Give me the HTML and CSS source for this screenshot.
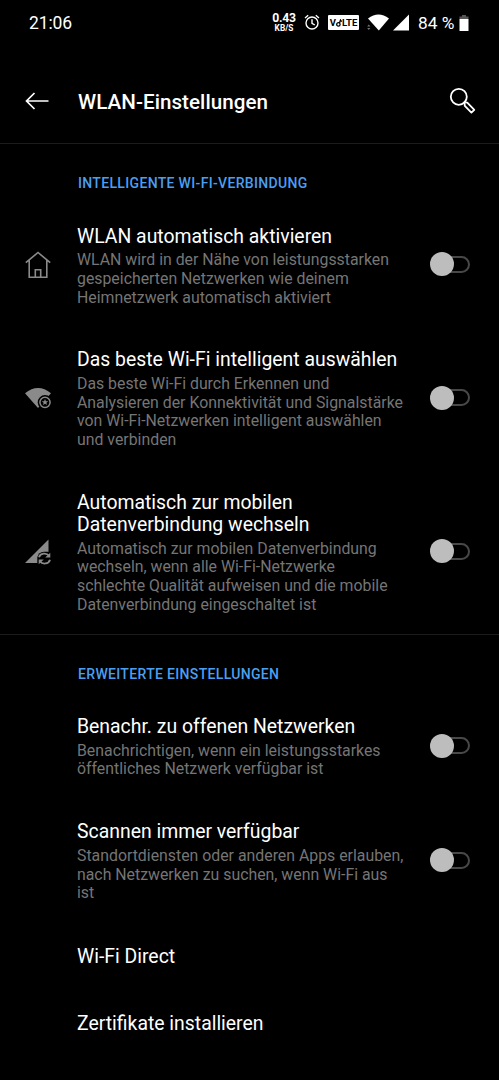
FILE: index.html
```html
<!DOCTYPE html>
<html lang="de">
<head>
<meta charset="utf-8">
<title>WLAN-Einstellungen</title>
<link rel="stylesheet" href="styles.css">
</head>
<body>
<div class="status">
  <span class="clock">21:06</span>
  <span class="speed"><b>0.43</b><small>KB/S</small></span>
  <svg class="alarm" width="16" height="17" viewBox="0 0 16 17" fill="none" stroke="#fff" stroke-width="1.4"><circle cx="8" cy="9" r="6"/><path d="M8 5.3V9.3L10.8 11M1 4 4.2 1.3M15 4 11.8 1.3"/></svg>
  <span class="volte">V<svg width="6" height="8" viewBox="0 0 6 8" fill="none" stroke="#000" stroke-width="1.3"><circle cx="2.4" cy="5.4" r="1.7"/><path d="M3.5 4 4.5 1 5.7 2.6"/></svg>LTE</span>
  <svg class="wifi" width="23" height="17" viewBox="0 0 23 17"><path fill="#fff" d="M1 4.5Q11.5-3.5 22 4.5L11.8 16.5Z"/><path fill="#777" d="M.2 12.5 1.8 10.5 3.4 12.5ZM.2 14 1.8 16 3.4 14Z"/></svg>
  <svg class="signal" width="16" height="17" viewBox="0 0 16 17"><path fill="#fff" d="M16 .5V16.5H0Z"/></svg>
  <span class="percent">84 %</span>
  <svg class="battery" width="10" height="16" viewBox="0 0 10 16"><path fill="#555" d="M3 0H7V1.5H9.5V4H.5V1.5H3Z"/><path fill="#fff" d="M.5 4H9.5V16H.5Z"/></svg>
</div>
<header class="appbar">
  <svg class="back" width="24" height="18" viewBox="0 0 24 18" fill="none" stroke="#fff" stroke-width="1.7"><path d="M23.5 9H1.5M9.5 1 1.5 9 9.5 17"/></svg>
  <h1>WLAN-Einstellungen</h1>
  <svg class="search" width="28" height="28" viewBox="0 0 28 28" fill="none" stroke="#fff" stroke-width="1.8"><circle cx="9.8" cy="9.8" r="8"/><path stroke-linejoin="round" d="M15.4 15.2 18.3 15.7 25.3 22.8 22.4 25.6 15.8 18.9Z"/></svg>
</header>
<section>
  <h2>INTELLIGENTE WI-FI-VERBINDUNG</h2>
  <div class="row">
    <svg class="icon" width="26" height="28" viewBox="0 0 26 28" fill="none" stroke="#8a8a8a" stroke-width="1.6"><path d="M.8 11.7 13 1.5 25.2 11.7M4.2 9V26.3H21.8V9M10.3 26V18.7H15.7V26"/></svg>
    <div class="text">
      <h3>WLAN automatisch aktivieren</h3>
      <p>WLAN wird in der Nähe von leistungsstarken<br>gespeicherten Netzwerken wie deinem<br>Heimnetzwerk automatisch aktiviert</p>
    </div>
    <span class="toggle"></span>
  </div>
  <div class="row">
    <svg class="icon" width="26" height="28" viewBox="0 0 26 28"><path fill="#8a8a8a" d="M0 9.3Q13-1.3 26 9.3L13 24Z"/><circle cx="20" cy="18.3" r="7.3"/><circle cx="20" cy="18.3" r="5.1" fill="none" stroke="#8a8a8a" stroke-width="1.5"/><path fill="#8a8a8a" d="M20 15 20.9 17.2 23.2 17.3 21.4 18.8 22 21 20 19.8 18 21 18.6 18.8 16.8 17.3 19.1 17.2Z"/></svg>
    <div class="text">
      <h3>Das beste Wi-Fi intelligent auswählen</h3>
      <p>Das beste Wi-Fi durch Erkennen und<br>Analysieren der Konnektivität und Signalstärke<br>von Wi-Fi-Netzwerken intelligent auswählen<br>und verbinden</p>
    </div>
    <span class="toggle"></span>
  </div>
  <div class="row">
    <svg class="icon" width="26" height="28" viewBox="0 0 26 28"><path fill="#8a8a8a" d="M23.5 1.5V25H0Z"/><path d="M12.3 28V19.5Q13.5 14 19 13.8H26V28Z"/><path fill="none" stroke="#8a8a8a" stroke-width="1.8" d="M14 19.3C15.2 14.8 21.5 14.5 24.2 17.8M25 21.8C23.8 26.3 17.5 26.6 14.8 23.3"/><path fill="#8a8a8a" d="M25.3 14.8V19.6H20.2ZM13.7 26.3V21.5H18.8Z"/></svg>
    <div class="text">
      <h3>Automatisch zur mobilen<br>Datenverbindung wechseln</h3>
      <p>Automatisch zur mobilen Datenverbindung<br>wechseln, wenn alle Wi-Fi-Netzwerke<br>schlechte Qualität aufweisen und die mobile<br>Datenverbindung eingeschaltet ist</p>
    </div>
    <span class="toggle"></span>
  </div>
</section>
<section class="advanced">
  <h2>ERWEITERTE EINSTELLUNGEN</h2>
  <div class="row">
    <div class="text">
      <h3>Benachr. zu offenen Netzwerken</h3>
      <p>Benachrichtigen, wenn ein leistungsstarkes<br>öffentliches Netzwerk verfügbar ist</p>
    </div>
    <span class="toggle"></span>
  </div>
  <div class="row">
    <div class="text">
      <h3>Scannen immer verfügbar</h3>
      <p>Standortdiensten oder anderen Apps erlauben,<br>nach Netzwerken zu suchen, wenn Wi-Fi aus<br>ist</p>
    </div>
    <span class="toggle"></span>
  </div>
  <div class="row single"><div class="text"><h3>Wi-Fi Direct</h3></div></div>
  <div class="row single"><div class="text"><h3>Zertifikate installieren</h3></div></div>
</section>
</body>
</html>
```
FILE: styles.css
```css
*, *::before, *::after { box-sizing: border-box; }
body { margin: 0; height: 1080px; overflow: hidden; background: #000; color: #fff; font-family: Roboto, sans-serif; }
h1, h2, h3, p { margin: 0; font-weight: 400; white-space: nowrap; }
svg { display: block; flex: none; }
.status { display: flex; align-items: center; height: 45px; padding: 0 29px; font-size: 17.5px; }
.clock { flex: none; width: 244px; letter-spacing: -0.1px; }
.speed { width: 22px; display: flex; flex-direction: column; align-items: center; line-height: 1; }
.speed b { font-size: 12.2px; line-height: 10px; font-weight: 700; letter-spacing: -0.3px; }
.speed small { font-size: 8.3px; line-height: 8px; font-weight: 700; margin-top: 1px; }
.alarm { margin-left: 9px; }
.volte { display: flex; align-items: center; justify-content: center; flex: none; width: 31px; height: 15px; margin-left: 8px; border-radius: 1px; background: #fff; color: #000; font-size: 9.5px; font-weight: 700; }
.wifi { margin-left: 8px; }
.signal { margin-left: 3px; }
.percent { flex: none; width: 36px; margin-left: 9px; white-space: nowrap; font-size: 17.3px; }
.battery { margin-left: 5px; }
.appbar { display: flex; align-items: center; height: 98px; padding: 14px 22px 0 25px; }
.appbar h1 { flex: 1; margin: 2px 0 0 29px; font-size: 20.6px; font-weight: 500; letter-spacing: 0.05px; }
section { padding-top: 30px; border-top: 1px solid #1c1c1c; }
h2 { height: 30px; padding-left: 78px; font-size: 14px; line-height: 19px; font-weight: 500; letter-spacing: 0.33px; color: #4a9ff0; }
.row { display: grid; grid-template-columns: 77px 1fr 69px; align-items: center; padding: 21.6px 0 20.5px; }
.row + .row { padding-bottom: 20.2px; }
.icon { grid-column: 1; margin: -3px 0 0 25px; }
.text { grid-column: 2; }
h3 { font-size: 19.4px; line-height: 22.6px; }
p { margin-top: 3px; font-size: 15.85px; line-height: 18.7px; color: #757575; }
.toggle { grid-column: 3; position: relative; width: 40px; height: 24px; margin: -4px 0 0; }
.toggle::before { content: ""; position: absolute; left: 8px; top: 3.5px; width: 32px; height: 17px; border: 2px solid #484848; border-radius: 9px; }
.toggle::after { content: ""; position: absolute; left: 0; top: 0; width: 24px; height: 24px; border-radius: 50%; background: #bdbdbd; }
.advanced { margin-top: -0.8px; }
.advanced h2 { height: 29.6px; }
.single { height: 66.8px; }
```
